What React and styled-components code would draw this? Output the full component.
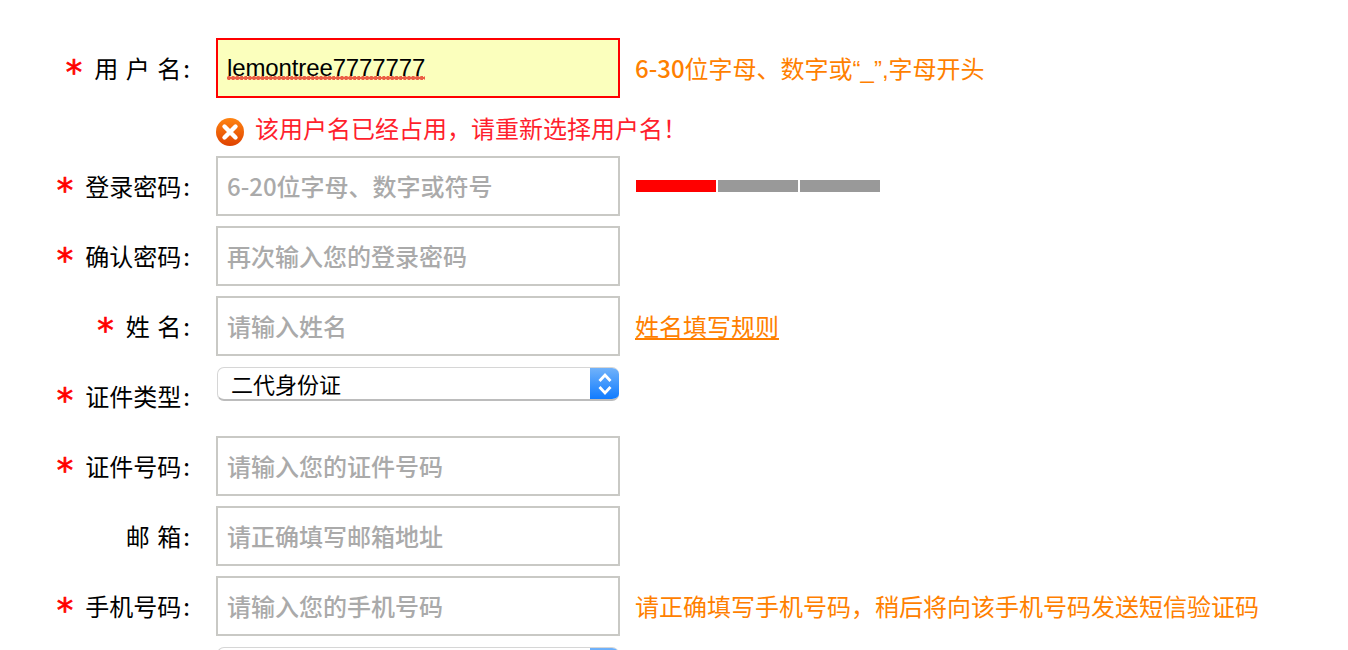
import React from "react"
import styled, { createGlobalStyle } from "styled-components"

const GlobalStyle = createGlobalStyle`
  html, body {
    margin: 0;
    height: 650px;
    overflow: hidden;
    background: #fff;
  }
  body {
    font-family: "Noto Sans CJK SC", "Liberation Sans", sans-serif;
    font-size: 24px;
    color: #000;
  }
`

const Form = styled.form`
  display: flex;
  flex-direction: column;
  gap: 10px;
  padding-top: 38px;
`

const Row = styled.div`
  display: flex;
  align-items: center;
  height: 60px;
`

const Label = styled.label`
  flex: none;
  display: flex;
  align-items: center;
  justify-content: flex-end;
  width: 190px;
  margin-right: 26px;
  line-height: 30px;
  word-spacing: 2.2px;
  white-space: nowrap;
`

const Colon = styled.span`
  margin-left: 2px;
`

const Star = styled.span`
  font-family: "DejaVu Sans", sans-serif;
  font-size: 33px;
  line-height: 30px;
  height: 20px;
  color: #f00;
  -webkit-text-stroke: 0.7px #f00;
  margin-right: 12px;
`

const Input = styled.input`
  flex: none;
  box-sizing: border-box;
  width: 404px;
  height: 60px;
  margin: 0;
  padding: 0 9px 2px;
  border: 2px solid #c9c9c5;
  border-radius: 0;
  outline: none;
  background: #fff;
  font: inherit;
  color: #000;
  &::placeholder {
    color: #aaa;
    font-weight: 500;
    opacity: 1;
  }
`

const ErrorBox = styled.div`
  flex: none;
  box-sizing: border-box;
  display: flex;
  align-items: center;
  width: 404px;
  height: 60px;
  padding: 0 9px;
  border: 2px solid #f00;
  background: #fbffbd;
`

const TypedValue = styled.span`
  display: inline-block;
  height: 22px;
  padding-bottom: 2px;
  font-family: "Liberation Sans", sans-serif;
  letter-spacing: -0.12px;
  line-height: 24px;
  background: radial-gradient(circle at 2px 2px, #ec5f45 2px, transparent 2.3px) left bottom / 4.2px 4px repeat-x;
`

const Hint = styled.span`
  margin-left: 15px;
  padding-bottom: 2px;
  color: #ff7f00;
  white-space: nowrap;
`

const Digits = styled.span`
  font-weight: 500;
`

const Quoted = styled.span`
  font-family: "Liberation Sans", sans-serif;
`

const HintLink = styled.a`
  margin-left: 15px;
  padding-bottom: 2px;
  color: #ff7f00;
  text-decoration: underline;
  white-space: nowrap;
`

const ErrorRow = styled.div`
  display: flex;
  align-items: flex-end;
  height: 38px;
  padding-left: 216px;
`

const ErrorText = styled.span`
  margin-left: 11px;
  color: #ff1f2e;
  line-height: 32px;
  position: relative;
  top: -2px;
  white-space: nowrap;
`

const Strength = styled.div`
  display: flex;
  gap: 2px;
  margin-left: 16px;
`

const StrengthBar = styled.span`
  width: 80px;
  height: 12px;
  background: ${p => (p.$on ? "#f00" : "#999")};
`

const SelectBox = styled.div`
  flex: none;
  box-sizing: border-box;
  display: flex;
  align-self: flex-start;
  justify-content: space-between;
  width: 402px;
  height: 34px;
  margin: 1px 0 0 1px;
  border: 1px solid #d6d6d6;
  border-bottom: 2px solid #bcbcbc;
  border-right: none;
  border-radius: 7px;
  overflow: hidden;
  font-size: 22px;
  line-height: 30px;
`

const SelectText = styled.span`
  padding-left: 13px;
`

const SelectArrow = styled.span`
  flex: none;
  display: flex;
  align-items: center;
  justify-content: center;
  width: 29px;
  margin: -1px 0 -2px;
  background: linear-gradient(#74b4fa, #0a78ff);
`

const ArrowIcon = () => (
  <svg width="16" height="26" viewBox="0 0 16 26" fill="none" stroke="#fff" strokeWidth="2.8">
    <path d="M2.5 10 L8 4 L13.5 10" />
    <path d="M2.5 16 L8 22 L13.5 16" />
  </svg>
)

const ErrorIcon = () => (
  <svg width="28" height="28" viewBox="0 0 28 28">
    <defs>
      <linearGradient id="errorFill" x1="0" y1="0" x2="0" y2="1">
        <stop offset="0" stopColor="#ff8412" />
        <stop offset="1" stopColor="#df4200" />
      </linearGradient>
    </defs>
    <circle cx="14" cy="14" r="14" fill="url(#errorFill)" />
    <path d="M8.5 8.5 L19.5 19.5 M19.5 8.5 L8.5 19.5" stroke="#fff" strokeWidth="4.4" strokeLinecap="round" />
  </svg>
)

const FieldLabel = ({ required, children }) => (
  <Label>
    {required && <Star>*</Star>}
    {children}
    <Colon>:</Colon>
  </Label>
)

const TextRow = ({ label, required = true, placeholder, children }) => (
  <Row>
    <FieldLabel required={required}>{label}</FieldLabel>
    <Input type="text" placeholder={placeholder} readOnly />
    {children}
  </Row>
)

const SelectRow = ({ label, value }) => (
  <Row>
    <FieldLabel required>{label}</FieldLabel>
    <SelectBox>
      <SelectText>{value}</SelectText>
      <SelectArrow>
        <ArrowIcon />
      </SelectArrow>
    </SelectBox>
  </Row>
)

export default function App() {
  return (
    <>
      <GlobalStyle />
      <Form>
        <Row>
          <FieldLabel required>用 户 名</FieldLabel>
          <ErrorBox>
            <TypedValue>lemontree7777777</TypedValue>
          </ErrorBox>
          <Hint><Digits>6-30</Digits>位字母、数字或<Quoted>“_”,</Quoted>字母开头</Hint>
        </Row>
        <ErrorRow>
          <ErrorIcon />
          <ErrorText>该用户名已经占用，请重新选择用户名！</ErrorText>
        </ErrorRow>
        <TextRow label="登录密码" placeholder="6-20位字母、数字或符号">
          <Strength>
            <StrengthBar $on />
            <StrengthBar />
            <StrengthBar />
          </Strength>
        </TextRow>
        <TextRow label="确认密码" placeholder="再次输入您的登录密码" />
        <TextRow label="姓 名" placeholder="请输入姓名">
          <HintLink href="#">姓名填写规则</HintLink>
        </TextRow>
        <SelectRow label="证件类型" value="二代身份证" />
        <TextRow label="证件号码" placeholder="请输入您的证件号码" />
        <TextRow label="邮 箱" required={false} placeholder="请正确填写邮箱地址" />
        <TextRow label="手机号码" placeholder="请输入您的手机号码">
          <Hint>请正确填写手机号码，稍后将向该手机号码发送短信验证码</Hint>
        </TextRow>
        <Row>
          <Label />
          <SelectBox>
            <SelectText />
            <SelectArrow>
              <ArrowIcon />
            </SelectArrow>
          </SelectBox>
        </Row>
      </Form>
    </>
  )
}
